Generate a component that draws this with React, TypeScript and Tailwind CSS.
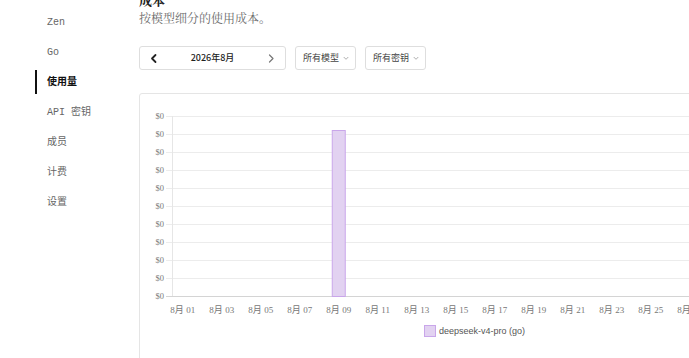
import { useState } from "react";

const nav = [
  { label: "Zen" },
  { label: "Go" },
  { label: "使用量", active: true },
  { label: "API 密钥" },
  { label: "成员" },
  { label: "计费" },
  { label: "设置" },
];

const Chevron = ({ dir, className }: { dir: "left" | "right" | "down"; className?: string }) => {
  const d =
    dir === "left" ? "M6.5 2 L3 5.5 L6.5 9" : dir === "right" ? "M3.5 2 L7 5.5 L3.5 9" : "M2.5 4 L5 6.5 L7.5 4";
  return (
    <svg viewBox="0 0 10 11" className={className} fill="none" stroke="currentColor" strokeLinecap="round" strokeLinejoin="round">
      <path d={d} />
    </svg>
  );
};

// chart geometry, card-local coordinates
const plotLeft = 33;
const dayW = 19.5;
const rows = Array.from({ length: 11 }, (_, i) => 22 + i * 18);
const days = Array.from({ length: 31 }, (_, i) => i + 1);
const usage: Record<number, number> = { 9: 36 };

const Chart = () => (
  <svg width="620" height="280" className="block" style={{ fontFamily: '"Liberation Serif", "Noto Sans CJK SC", serif' }}>
    {rows.map((y, i) => (
      <g key={"row" + i}>
        <line x1={26} x2={620} y1={y + 0.5} y2={y + 0.5} stroke={i === rows.length - 1 ? "#d4d4d4" : "#ececec"} />
        <text x={24} y={y + 3} fontSize="8.5" fill="#777" textAnchor="end">
          $0
        </text>
      </g>
    ))}
    <line x1={32.5} x2={32.5} y1={22} y2={202} stroke="#e6e6e6" />
    {days.map((d) => {
      const cx = plotLeft + dayW * (d - 0.5);
      const top = usage[d];
      return (
        <g key={"day" + d}>
          {top !== undefined && (
            <rect x={cx - 7 + 0.5} y={top + 0.5} width={13} height={202 - top} fill="#e2d2f1" stroke="#c9a6ea" />
          )}
          {d % 2 === 1 && (
            <text x={cx} y={219} fontSize="9" fill="#777" textAnchor="middle">
              8月 {String(d).padStart(2, "0")}
            </text>
          )}
        </g>
      );
    })}
    <rect x={284.5} y={231.5} width={11} height={11} fill="#e2d2f1" stroke="#c9a6ea" />
    <text x={299} y={240} fontSize="9" fill="#555" style={{ fontFamily: '"Liberation Sans", sans-serif' }}>
      deepseek-v4-pro (go)
    </text>
  </svg>
);

export default function App() {
  const [month] = useState("2026年8月");
  return (
    <div className="flex h-[358px] w-[689px] overflow-hidden bg-white font-['Noto_Sans_CJK_SC',sans-serif]">
      <aside className="w-[139px] shrink-0 pt-[10px] pl-[35px]">
        <ul className="flex flex-col gap-[6px]">
          {nav.map((n) => (
            <li
              key={n.label}
              className={
                n.active
                  ? "flex h-[24px] items-center border-l-2 border-[#111] pl-[10px] text-[10px] font-bold text-[#111] font-['Liberation_Mono','Noto_Sans_CJK_SC',monospace]"
                  : "flex h-[24px] items-center border-l-2 border-transparent pl-[10px] text-[10px] text-[#666] font-['Liberation_Mono','Noto_Sans_CJK_SC',monospace]"
              }
            >
              {n.label}
            </li>
          ))}
        </ul>
      </aside>
      <main className="-mt-[9px] flex min-w-0 flex-1 flex-col">
        <h2 className="text-[13px] leading-[17px] font-bold text-[#222] font-['Noto_Serif_CJK_SC','Liberation_Serif',serif]">成本</h2>
        <p className="mt-[2px] text-[12px] leading-[16px] text-[#6b6b6b] font-['Noto_Serif_CJK_SC','Liberation_Serif',serif]">
          按模型细分的使用成本。
        </p>
        <div className="mt-[20px] flex gap-[9px]">
          <div className="flex h-[24px] w-[147px] items-center justify-between rounded-[3px] border border-[#dedede] px-[9px]">
            <Chevron dir="left" className="h-[11px] w-[10px] stroke-[1.8] text-[#222]" />
            <span className="whitespace-nowrap text-[9px] font-medium text-[#222]">{month}</span>
            <Chevron dir="right" className="h-[11px] w-[10px] stroke-[1.2] text-[#777]" />
          </div>
          <div className="flex h-[24px] w-[61px] items-center gap-[3px] rounded-[3px] border border-[#dedede] pl-[7px]">
            <span className="whitespace-nowrap text-[9px] text-[#444]">所有模型</span>
            <Chevron dir="down" className="h-[9px] w-[8px] shrink-0 stroke-1 text-[#999]" />
          </div>
          <div className="flex h-[24px] w-[61px] items-center gap-[3px] rounded-[3px] border border-[#dedede] pl-[7px]">
            <span className="whitespace-nowrap text-[9px] text-[#444]">所有密钥</span>
            <Chevron dir="down" className="h-[9px] w-[8px] shrink-0 stroke-1 text-[#999]" />
          </div>
        </div>
        <div className="mt-[23px] h-[300px] w-[640px] shrink-0 rounded-[3px] border border-[#e5e5e5]">
          <Chart />
        </div>
      </main>
    </div>
  );
}
